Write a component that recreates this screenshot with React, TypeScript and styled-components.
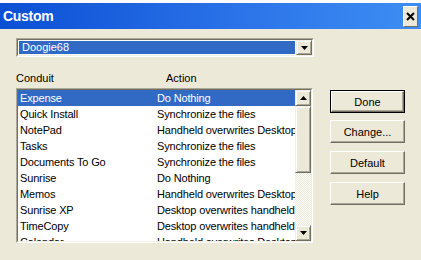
import React from 'react'
import styled, {createGlobalStyle} from 'styled-components'

const Global = createGlobalStyle`
  body {
    margin: 0;
    background: #ece9d8;
    font-family: "Liberation Sans", Arial, sans-serif;
    font-size: 11px;
  }
`

const Window = styled.div`
  width: 421px;
  height: 260px;
  background: #ece9d8;
  overflow: hidden;
  display: flex;
  flex-direction: column;
`

const TopStrip = styled.div`
  height: 3px;
  background: #fdfdfd;
`

const TitleBar = styled.div`
  height: 26px;
  display: flex;
  align-items: center;
  justify-content: space-between;
  padding: 0 3px 0 3px;
  background: linear-gradient(to right, #0b4fd4 0%, #2a72e8 55%, #3d8ef4 100%);
`

const Title = styled.div`
  color: #fff;
  font-family: "Liberation Sans", Arial, sans-serif;
  font-weight: bold;
  font-size: 14px;
  letter-spacing: -0.3px;
`

const CloseButton = styled.div`
  width: 13px;
  height: 19px;
  background: #ece9d8;
  border-top: 1px solid #fff;
  border-left: 1px solid #fff;
  border-right: 1px solid #716f64;
  border-bottom: 1px solid #716f64;
  display: flex;
  align-items: center;
  justify-content: center;
`

const Body = styled.div`
  flex: 1;
  padding: 9px 0 0 16px;
  display: flex;
  flex-direction: column;
`

const Sunken = styled.div`
  border-top: 1px solid #aca899;
  border-left: 1px solid #aca899;
  border-right: 1px solid #fff;
  border-bottom: 1px solid #fff;
`

const SunkenInner = styled.div`
  border-top: 1px solid #716f64;
  border-left: 1px solid #716f64;
  border-right: 1px solid #f1efe2;
  border-bottom: 1px solid #f1efe2;
  background: #fff;
`

const Combo = styled(Sunken)`
  width: 296px;
  height: 17px;
`

const ComboInner = styled(SunkenInner)`
  height: 15px;
  display: flex;
`

const ComboValue = styled.div`
  flex: 1;
  margin: 1px;
  background: #316ac5;
  color: #fff;
  padding-left: 3px;
  line-height: 13px;
`

const Bevel = styled.div<{$w: number; $h: number}>`
  box-sizing: border-box;
  width: ${p => p.$w}px;
  height: ${p => p.$h}px;
  background: #ece9d8;
  border-top: 1px solid #f1efe2;
  border-left: 1px solid #f1efe2;
  border-right: 1px solid #716f64;
  border-bottom: 1px solid #716f64;
  box-shadow: inset 1px 1px 0 #fff, inset -1px -1px 0 #aca899;
  display: flex;
  align-items: center;
  justify-content: center;
`

const Labels = styled.div`
  display: flex;
  margin-top: 14px;
  height: 14px;
  line-height: 14px;
  color: #000;
`

const LabelCell = styled.div<{$w: number}>`
  width: ${p => p.$w}px;
`

const Content = styled.div`
  display: flex;
  margin-top: 3px;
  gap: 17px;
`

const ListBox = styled(Sunken)`
  width: 297px;
  height: 155px;
  box-sizing: border-box;
`

const ListInner = styled(SunkenInner)`
  height: 153px;
  box-sizing: border-box;
  display: flex;
  overflow: hidden;
`

const Rows = styled.div`
  flex: 1;
  overflow: hidden;
`

const Row = styled.div<{$selected?: boolean}>`
  display: flex;
  height: 16px;
  line-height: 16px;
  background: ${p => (p.$selected ? '#316ac5' : 'transparent')};
  color: ${p => (p.$selected ? '#fff' : '#000')};
  white-space: nowrap;
  letter-spacing: -0.15px;
`

const Cell = styled.div<{$w?: number}>`
  ${p => (p.$w ? `width: ${p.$w}px;` : 'flex: 1;')}
  padding-left: 2px;
  overflow: hidden;
`

const ScrollBar = styled.div`
  width: 16px;
  display: flex;
  flex-direction: column;
  background-color: #f4f3ee;
  background-image: repeating-conic-gradient(#ece9d8 0% 25%, #fcfcfa 0% 50%);
  background-size: 2px 2px;
`

const Track = styled.div`
  flex: 1;
`

const Buttons = styled.div`
  display: flex;
  flex-direction: column;
  gap: 7px;
  padding-top: 2px;
`

const Button = styled.div<{$default?: boolean}>`
  box-sizing: border-box;
  width: 75px;
  height: 23px;
  background: #ece9d8;
  border: ${p => (p.$default ? '1px solid #000' : '0')};
  display: flex;
  margin-bottom: ${p => (p.$default ? '0' : '1px')};
`

const ButtonFace = styled.div`
  flex: 1;
  border-top: 1px solid #fff;
  border-left: 1px solid #fff;
  border-right: 1px solid #716f64;
  border-bottom: 1px solid #716f64;
  box-shadow: inset -1px -1px 0 #aca899;
  display: flex;
  align-items: center;
  justify-content: center;
  color: #000;
`

const Arrow = ({up}: {up?: boolean}) => (
  <svg width='7' height='4' viewBox='0 0 7 4'>
    <path d={up ? 'M3.5 0 L7 4 L0 4 Z' : 'M0 0 L7 0 L3.5 4 Z'} fill='#000' />
  </svg>
)

const rows = [
  ['Expense', 'Do Nothing'],
  ['Quick Install', 'Synchronize the files'],
  ['NotePad', 'Handheld overwrites Desktop'],
  ['Tasks', 'Synchronize the files'],
  ['Documents To Go', 'Synchronize the files'],
  ['Sunrise', 'Do Nothing'],
  ['Memos', 'Handheld overwrites Desktop'],
  ['Sunrise XP', 'Desktop overwrites handheld'],
  ['TimeCopy', 'Desktop overwrites handheld'],
  ['Calendar', 'Handheld overwrites Desktop'],
]

const App = () => (
  <Window>
    <Global />
    <TopStrip />
    <TitleBar>
      <Title>{'Custom'}</Title>
      <CloseButton>
        <svg width='9' height='9' viewBox='0 0 9 9'>
          <path d='M1 1 L8 8 M8 1 L1 8' stroke='#000' strokeWidth='2' />
        </svg>
      </CloseButton>
    </TitleBar>
    <Body>
      <Combo>
        <ComboInner>
          <ComboValue>{'Doogie68'}</ComboValue>
          <Bevel $w={16} $h={15}>
            <Arrow />
          </Bevel>
        </ComboInner>
      </Combo>
      <Labels>
        <LabelCell $w={150}>{'Conduit'}</LabelCell>
        <LabelCell $w={100}>{'Action'}</LabelCell>
      </Labels>
      <Content>
        <ListBox>
          <ListInner>
            <Rows>
              {rows.map(([name, action], i) => (
                <Row key={name} $selected={i === 0}>
                  <Cell $w={135}>{name}</Cell>
                  <Cell>{action}</Cell>
                </Row>
              ))}
            </Rows>
            <ScrollBar>
              <Bevel $w={16} $h={16}>
                <Arrow up />
              </Bevel>
              <Bevel $w={16} $h={67} />
              <Track />
              <Bevel $w={16} $h={16}>
                <Arrow />
              </Bevel>
            </ScrollBar>
          </ListInner>
        </ListBox>
        <Buttons>
          <Button $default><ButtonFace>{'Done'}</ButtonFace></Button>
          <Button><ButtonFace>{'Change...'}</ButtonFace></Button>
          <Button><ButtonFace>{'Default'}</ButtonFace></Button>
          <Button><ButtonFace>{'Help'}</ButtonFace></Button>
        </Buttons>
      </Content>
    </Body>
  </Window>
)

export default App
